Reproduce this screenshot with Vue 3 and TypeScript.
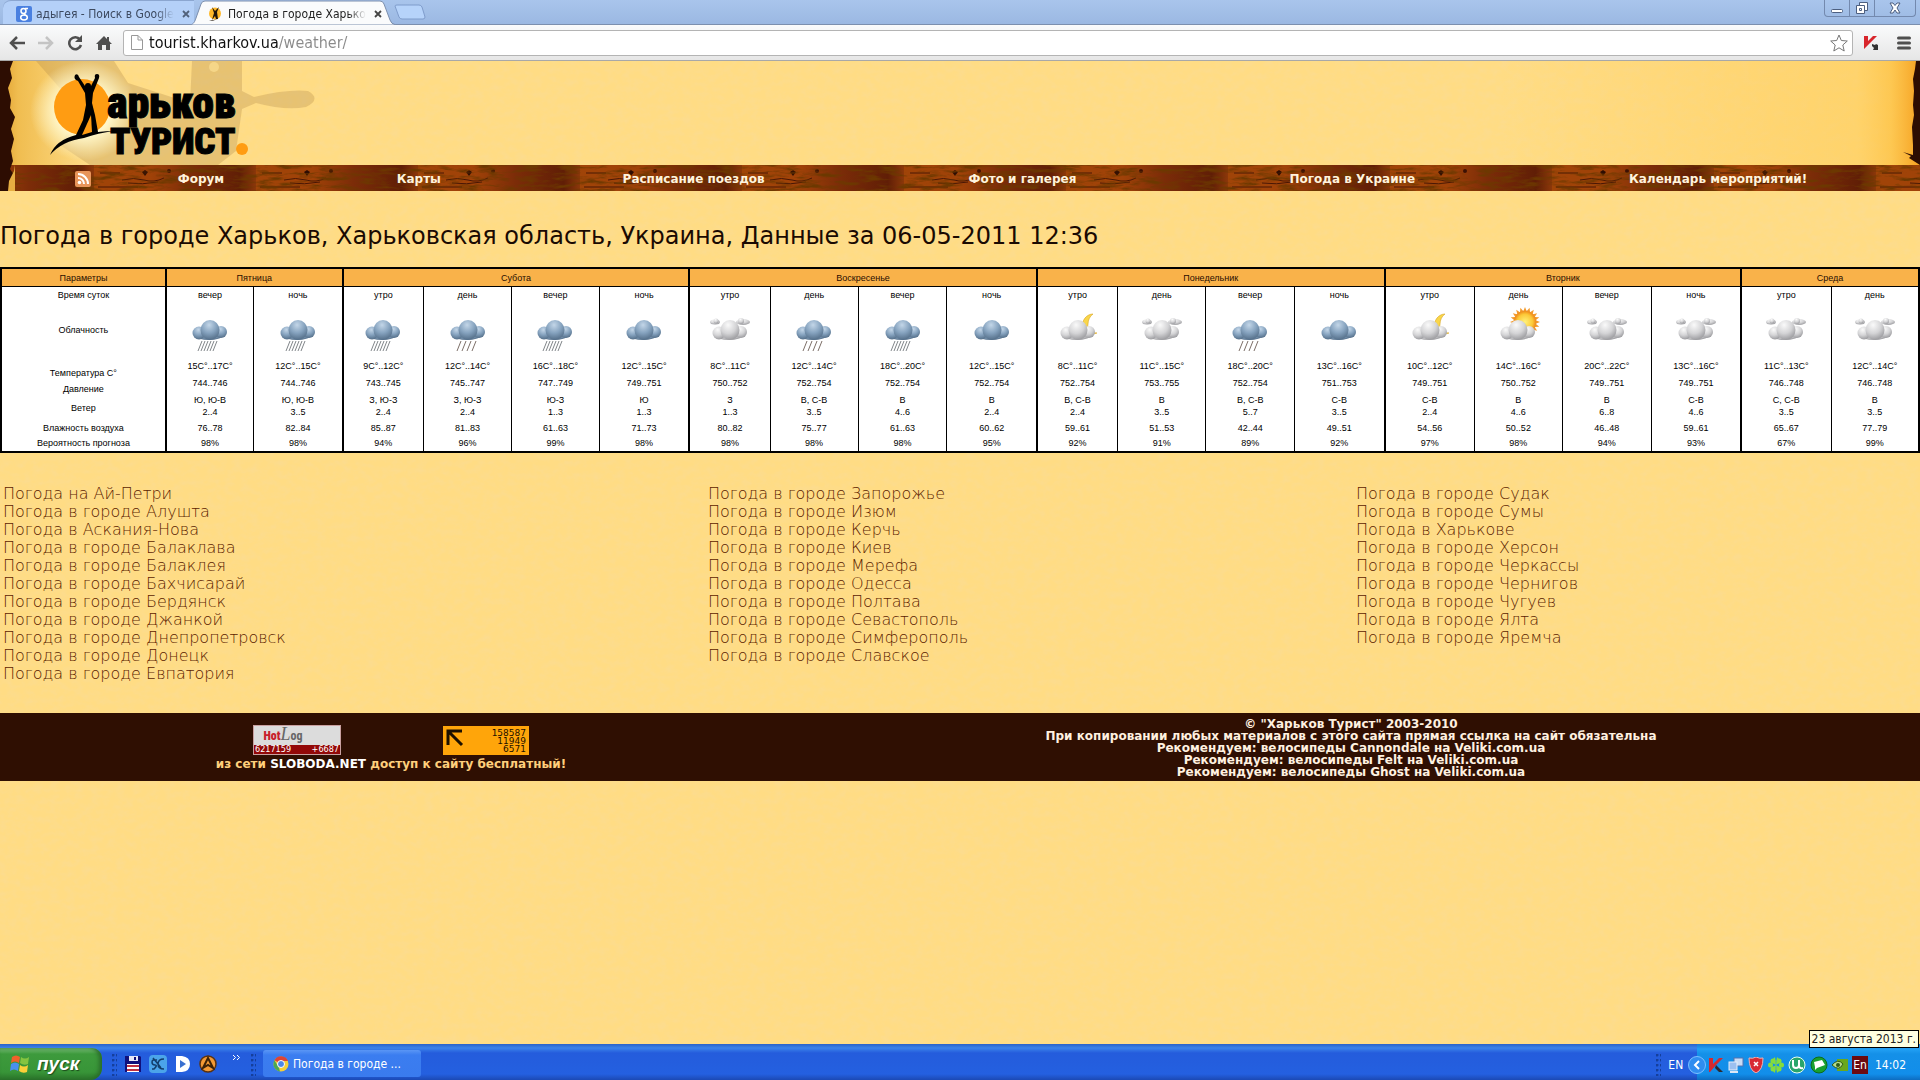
<script setup lang="ts">
type Sky = 'heavy' | 'rain' | 'dark' | 'clouds' | 'moon' | 'sun'

interface Slot {
  width: number
  time: string
  sky: Sky
  temp: string
  pressure: string
  wind: string
  speed: string
  humidity: string
  chance: string
}

interface Day {
  name: string
  slots: Slot[]
}

const slot = (
  width: number, time: string, sky: Sky, temp: string, pressure: string,
  wind: string, speed: string, humidity: string, chance: string,
): Slot => ({ width, time, sky, temp, pressure, wind, speed, humidity, chance })

const labelWidth = 165

const days: Day[] = [
  {
    name: 'Пятница',
    slots: [
      slot(88, 'вечер', 'heavy', '15C°..17C°', '744..746', 'Ю, Ю-В', '2..4', '76..78', '98%'),
      slot(89, 'ночь', 'heavy', '12C°..15C°', '744..746', 'Ю, Ю-В', '3..5', '82..84', '98%'),
    ],
  },
  {
    name: 'Субота',
    slots: [
      slot(81, 'утро', 'heavy', '9C°..12C°', '743..745', 'З, Ю-З', '2..4', '85..87', '94%'),
      slot(88, 'день', 'rain', '12C°..14C°', '745..747', 'З, Ю-З', '2..4', '81..83', '96%'),
      slot(88, 'вечер', 'heavy', '16C°..18C°', '747..749', 'Ю-З', '1..3', '61..63', '99%'),
      slot(90, 'ночь', 'dark', '12C°..15C°', '749..751', 'Ю', '1..3', '71..73', '98%'),
    ],
  },
  {
    name: 'Воскресенье',
    slots: [
      slot(81, 'утро', 'clouds', '8C°..11C°', '750..752', 'З', '1..3', '80..82', '98%'),
      slot(88, 'день', 'rain', '12C°..14C°', '752..754', 'В, С-В', '3..5', '75..77', '98%'),
      slot(89, 'вечер', 'heavy', '18C°..20C°', '752..754', 'В', '4..6', '61..63', '98%'),
      slot(90, 'ночь', 'dark', '12C°..15C°', '752..754', 'В', '2..4', '60..62', '95%'),
    ],
  },
  {
    name: 'Понедельник',
    slots: [
      slot(81, 'утро', 'moon', '8C°..11C°', '752..754', 'В, С-В', '2..4', '59..61', '92%'),
      slot(88, 'день', 'clouds', '11C°..15C°', '753..755', 'В', '3..5', '51..53', '91%'),
      slot(89, 'вечер', 'rain', '18C°..20C°', '752..754', 'В, С-В', '5..7', '42..44', '89%'),
      slot(90, 'ночь', 'dark', '13C°..16C°', '751..753', 'С-В', '3..5', '49..51', '92%'),
    ],
  },
  {
    name: 'Вторник',
    slots: [
      slot(90, 'утро', 'moon', '10C°..12C°', '749..751', 'С-В', '2..4', '54..56', '97%'),
      slot(88, 'день', 'sun', '14C°..16C°', '750..752', 'В', '4..6', '50..52', '98%'),
      slot(89, 'вечер', 'clouds', '20C°..22C°', '749..751', 'В', '6..8', '46..48', '94%'),
      slot(90, 'ночь', 'clouds', '13C°..16C°', '749..751', 'С-В', '4..6', '59..61', '93%'),
    ],
  },
  {
    name: 'Среда',
    slots: [
      slot(90, 'утро', 'clouds', '11C°..13C°', '746..748', 'С, С-В', '3..5', '65..67', '67%'),
      slot(88, 'день', 'clouds', '12C°..14C°', '746..748', 'В', '3..5', '77..79', '99%'),
    ],
  },
]

const slots = days.flatMap((d) => d.slots.map((s, i) => ({ ...s, first: i === 0 })))
const total = labelWidth + slots.reduce((sum, s) => sum + s.width, 0)
const share = (w: number) => ({ width: (w / total) * 100 + '%' })

const menu = ['Форум', 'Карты', 'Расписание поездов', 'Фото и галерея', 'Погода в Украине', 'Календарь мероприятий!']

const inCity = (names: string[]) => names.map((n) => 'Погода в городе ' + n)
const cities: string[][] = [
  [
    'Погода на Ай-Петри',
    'Погода в городе Алушта',
    'Погода в Аскания-Нова',
    ...inCity(['Балаклава', 'Балаклея', 'Бахчисарай', 'Бердянск', 'Джанкой', 'Днепропетровск', 'Донецк', 'Евпатория']),
  ],
  inCity(['Запорожье', 'Изюм', 'Керчь', 'Киев', 'Мерефа', 'Одесса', 'Полтава', 'Севастополь', 'Симферополь', 'Славское']),
  [
    ...inCity(['Судак', 'Сумы']),
    'Погода в Харькове',
    ...inCity(['Херсон', 'Черкассы', 'Чернигов', 'Чугуев', 'Ялта', 'Яремча']),
  ],
]

const partners = ['Cannondale', 'Felt', 'Ghost']

const rays = Array.from({ length: 20 }, (_, i) => i * 18)
</script>

<template>
  <div class="screen">
    <svg class="defs" width="0" height="0" aria-hidden="true">
      <defs>
        <radialGradient id="blue" cx="0.45" cy="0.25" r="0.8">
          <stop offset="0" stop-color="#c3d6e8" /><stop offset="0.5" stop-color="#86a3bf" /><stop offset="1" stop-color="#4d6781" />
        </radialGradient>
        <radialGradient id="grey" cx="0.4" cy="0.25" r="0.85">
          <stop offset="0" stop-color="#fafafa" /><stop offset="0.5" stop-color="#d4d4d6" /><stop offset="1" stop-color="#8c8c90" />
        </radialGradient>
        <radialGradient id="gold"><stop offset="0" stop-color="#fff27a" /><stop offset="0.7" stop-color="#fcc838" /><stop offset="1" stop-color="#f08a18" /></radialGradient>
        <radialGradient id="glow"><stop offset="0.5" stop-color="#fff6c8" /><stop offset="1" stop-color="#fff6c8" stop-opacity="0" /></radialGradient>
        <linearGradient id="burn"><stop offset="0" stop-color="#ffc84c" stop-opacity="0" /><stop offset="0.85" stop-color="#ffc84c" stop-opacity="0.45" /><stop offset="0.93" stop-color="#fdbf3c" stop-opacity="0.7" /><stop offset="1" stop-color="#f5a020" /></linearGradient>
        <linearGradient id="edge"><stop offset="0" stop-color="#e0a030" /><stop offset="0.2" stop-color="#f0bd50" /><stop offset="1" stop-color="#f0bd50" stop-opacity="0" /></linearGradient>
        <linearGradient id="plank">
          <stop offset="0" stop-color="#a04408" /><stop offset="0.35" stop-color="#a04208" /><stop offset="0.6" stop-color="#7c2c08" />
          <stop offset="0.9" stop-color="#601e06" /><stop offset="1" stop-color="#8c380a" />
        </linearGradient>
        <filter id="paper" x="0" y="0" width="100%" height="100%">
          <feTurbulence type="fractalNoise" baseFrequency="0.12 0.16" numOctaves="4" seed="4" />
          <feColorMatrix values="0 0 0 0 0.94  0 0 0 0 0.72  0 0 0 0 0.34  0 0.8 0 0 -0.3" />
        </filter>
        <filter id="grain" x="0" y="0" width="100%" height="100%">
          <feTurbulence type="fractalNoise" baseFrequency="0.05 0.25" numOctaves="4" seed="9" />
          <feColorMatrix values="0 0 0 0 0.15  0 0 0 0 0.04  0 0 0 0 0  0 3 0 0 -1.3" />
        </filter>
        <pattern id="wood" x="94" width="162" height="26" patternUnits="userSpaceOnUse">
          <rect width="162" height="26" fill="url(#plank)" />
          <g fill="none" stroke="#481604" stroke-width="1">
            <path d="M28 15q12-3 22 0t20-2M34 18q14 2 30-1M6 8h20M4 22h40" />
          </g>
          <path d="M48 7l3-2 3 2-3 4z" fill="#2e0c02" /><circle cx="75" cy="6" r="2" fill="#3c1003" />
        </pattern>
      </defs>
    </svg>

    <header class="browser">
      <div class="tabs">
        <div class="tab tab-idle">
          <svg width="16" height="16" viewBox="0 0 16 16" aria-hidden="true">
            <rect width="16" height="16" rx="2" fill="#4a80e0" />
            <g fill="none" stroke="#fff" stroke-width="1.5"><circle cx="7.5" cy="5" r="2.5" /><ellipse cx="8" cy="11.5" rx="3.3" ry="2.4" /><path d="M8 7.5l1.5 2M9 2.5h3" /></g>
          </svg>
          <span class="tab-title">адыгея - Поиск в Google</span>
          <button class="tab-close" aria-label="Закрыть вкладку"><svg width="8" height="8" viewBox="0 0 8 8"><path d="M1 1l6 6M7 1l-6 6" stroke="#51617a" stroke-width="1.8" /></svg></button>
        </div>
        <div class="tab tab-active">
          <svg class="tab-shape" width="206" height="25" viewBox="0 0 206 25" preserveAspectRatio="none" aria-hidden="true">
            <path d="M0 25C4 24 5 21 6 18L11 4Q12 1 15 1H190Q193 1 194 4L200 20Q201 24 206 25z" fill="#fafbfc" stroke="#7c8fae" />
          </svg>
          <svg width="16" height="16" viewBox="0 0 16 16" aria-hidden="true">
            <circle cx="7" cy="7.500" r="6" fill="#ffb92a" />
            <path d="M4 1l3 4 4-4-2 5 1 7H8L7 10l-3 4 2-7zM1 15l9-2-6 2z" fill="#20150a" />
          </svg>
          <span class="tab-title">Погода в городе Харьков</span>
          <button class="tab-close" aria-label="Закрыть вкладку"><svg width="8" height="8" viewBox="0 0 8 8"><path d="M1 1l6 6M7 1l-6 6" stroke="#444" stroke-width="1.800" /></svg></button>
        </div>
        <button class="tab-new" aria-label="Новая вкладка">
          <svg width="32" height="16" viewBox="0 0 32 16"><path d="M1 2Q1 1 3 1H25Q27 1 28 3L31 13Q31 15 29 15H8Q6 15 5 13z" fill="#b6d3fa" stroke="#7f9ccb" /></svg>
        </button>
        <div class="window-buttons">
          <button aria-label="Свернуть"><svg width="14" height="14" viewBox="0 0 14 14"><rect x="1.500" y="8.500" width="11" height="3" rx="1" fill="#fff" stroke="#4d5f80" /></svg></button>
          <button aria-label="Восстановить"><svg width="14" height="14" viewBox="0 0 14 14"><g fill="#fff" stroke="#4d5f80"><path d="M4.500 1.500h8v8h-8z" /><path d="M1.500 4.500h8v8h-8z" /><path d="M4.500 7.500h2v2h-2z" /></g></svg></button>
          <button class="wide" aria-label="Закрыть"><svg width="14" height="14" viewBox="0 0 14 14"><path d="M2 2h3l2 2.500L9 2h3L9 7l3 5H9L7 9l-2 3H2l3-5z" fill="#fff" stroke="#4d5f80" /></svg></button>
        </div>
      </div>
      <div class="toolbar">
        <button aria-label="Назад"><svg width="16" height="14" viewBox="0 0 16 14"><path d="M8 1L2 7l6 6M2 7h14" fill="none" stroke="#4f4f4f" stroke-width="2.500" /></svg></button>
        <button aria-label="Вперёд"><svg width="16" height="14" viewBox="0 0 16 14"><path d="M8 1l6 6-6 6M14 7H0" fill="none" stroke="#c4c4c4" stroke-width="2.500" /></svg></button>
        <button aria-label="Обновить"><svg width="16" height="16" viewBox="0 0 16 16"><path d="M13 4.500A6 6 0 1 0 14 10" fill="none" stroke="#4f4f4f" stroke-width="2.500" /><path d="M15 0v7H8z" fill="#4f4f4f" /></svg></button>
        <button aria-label="Домой"><svg width="16" height="16" viewBox="0 0 16 16"><path d="M8 1L0 9h2v6h4v-5h4v5h4V9h2l-3-3V2h-2v2z" fill="#4f4f4f" /></svg></button>
        <div class="address">
          <svg width="12" height="15" viewBox="0 0 12 15" aria-hidden="true"><path d="M.5.5H7L11.500 5v9.500H.5zM7 .5V5h4.500" fill="#fff" stroke="#999" /></svg>
          <input type="text" value="tourist.kharkov.ua/weather/" aria-label="Адрес" />
          <button aria-label="В закладки"><svg width="18" height="18" viewBox="0 0 18 18"><path d="M9 1l2.300 5.500 6 .5-4.500 4 1.400 6L9 13.800 3.800 17l1.400-6L.7 7l6-.5z" fill="#fff" stroke="#777" /></svg></button>
        </div>
        <button class="ext" aria-label="Kaspersky"><svg width="16" height="16" viewBox="0 0 16 16"><path d="M1 1h4v5l5-5h4L7 8l-6 6z" fill="#d8252c" /><path d="M9 9l3 1 1-1 2 1v5h-5l1-2-2-2z" fill="#333" /></svg></button>
        <button aria-label="Меню"><svg width="14" height="14" viewBox="0 0 14 14"><path d="M1.500 2h11M1.500 7h11M1.500 12h11" stroke="#4f4f4f" stroke-width="3" stroke-linecap="round" /></svg></button>
      </div>
    </header>

    <div class="page">
      <svg class="texture" aria-hidden="true"><rect width="100%" height="100%" filter="url(#paper)" /></svg>

      <div class="banner">
        <svg class="banner-right" width="420" height="104" viewBox="0 0 420 104" aria-hidden="true">
          <rect width="420" height="104" fill="url(#burn)" />
          <path d="M420 0h-4l-1 8-2 10 1 12-1 14 1 10-2 12 1 18v10l-10-3 8 4-2 2 11 7z" fill="#2d0d02" />
        </svg>
        <svg class="banner-left" width="340" height="130" viewBox="0 0 340 130" aria-hidden="true">
          <rect width="90" height="104" fill="url(#edge)" />
          <g fill="#b48b4a" opacity="0.32">
            <path d="M36 0h78l14 22 62 20 2-42h50v30l12 6q34-8 54-6 14 8-2 16-20 4-50-4l-14 6-6 42-18 14H90L60 84 80 50z" />
          </g>
          <circle cx="214" cy="6" r="5" fill="#f5d688" />
          <ellipse cx="84" cy="50" rx="54" ry="50" fill="url(#glow)" />
          <circle cx="82" cy="46" r="28" fill="#ff9c12" />
          <path d="M0 0h13l-3 8 2 9-4 10 3 12-1 8 5 9-4 12 3 10-3 12 2 10-3 8 5 8-1 7-5 5-2 8H0z" fill="#2d0d02" />
          <path d="M8 130l1-10 5-10 1-6v26z" fill="#e6ae42" />
          <path d="M75 14q3-2 4 2l6 9q0-3 3-3t3 3l4-8q-1-4 2-4t2 4l-6 15-1 10 3 12 3 17q8-1 16-1-16 2-30 7-22 3-34 17 6-15 26-20l7-15 3-15-1-12-7-12q-5-2-3-6z" fill="#000" />
          <path d="M91 54L82 74l10-3z" fill="#ff9c12" />
          <text class="logo" x="107" y="57">арьков</text>
          <text class="logo logo-caps" x="110" y="93">ТУРИСТ</text>
          <circle cx="242" cy="88" r="6" fill="#ff9c12" />
        </svg>
      </div>

      <nav class="menu">
        <svg class="wood" aria-hidden="true"><rect width="100%" height="100%" fill="url(#wood)" /><rect width="100%" height="100%" filter="url(#grain)" /></svg>
        <a href="#rss" aria-label="RSS">
          <svg width="16" height="16" viewBox="0 0 16 16"><rect width="16" height="16" rx="2" fill="#e8955a" /><g fill="none" stroke="#fff" stroke-width="2"><path d="M3 7a6 6 0 0 1 6 6M3 3a10 10 0 0 1 10 10" /></g><circle cx="4.500" cy="11.500" r="1.800" fill="#fff" /></svg>
        </a>
        <a v-for="item in menu" :key="item" href="#menu">{{ item }}</a>
      </nav>

      <main>
        <h1>Погода в городе Харьков, Харьковская область, Украина, Данные за 06-05-2011 12:36</h1>

        <table class="forecast">
          <colgroup>
            <col :style="share(labelWidth)" />
            <col v-for="(s, i) in slots" :key="i" :style="share(s.width)" />
          </colgroup>
          <thead>
            <tr>
              <th scope="col">Параметры</th>
              <th v-for="d in days" :key="d.name" scope="colgroup" class="first" :colspan="d.slots.length">{{ d.name }}</th>
            </tr>
          </thead>
          <tbody>
            <tr class="row-time">
              <th scope="row">Время суток</th>
              <td v-for="(s, i) in slots" :key="i" :class="{ first: s.first }">{{ s.time }}</td>
            </tr>
            <tr class="row-sky">
              <th scope="row">Облачность</th>
              <td v-for="(s, i) in slots" :key="i" :class="{ first: s.first }">
                <svg width="48" height="48" viewBox="0 0 48 48" aria-hidden="true">
                  <g v-if="s.sky === 'sun'">
                    <path v-for="r in rays" :key="r" d="M31 3l2 5h-4z" :transform="`rotate(${r} 31 18)`" fill="#f39a2c" />
                    <circle cx="31" cy="18" r="11" fill="url(#gold)" stroke="#ef9327" />
                  </g>
                  <path v-if="s.sky === 'moon'" d="M39 10c-6 0-12 6-10 14 2 6 8 7 14 5-7 0-10-4-9-9 0-4 2-8 5-10z" fill="#f9d64a" stroke="#d9a520" stroke-width="0.6" />
                  <g v-if="s.sky === 'clouds'" fill="url(#grey)">
                    <ellipse cx="9" cy="18" rx="5" ry="2.500" /><circle cx="10" cy="17" r="2.500" />
                    <ellipse cx="37" cy="18" rx="7" ry="3" /><circle cx="35" cy="17" r="3" />
                  </g>
                  <g :fill="['heavy', 'rain', 'dark'].includes(s.sky) ? 'url(#blue)' : 'url(#grey)'">
                    <ellipse cx="23" cy="32" rx="13" ry="4" />
                    <circle cx="35" cy="28" r="6" /><circle cx="13" cy="29" r="6.500" />
                    <ellipse cx="24" cy="26" rx="9.500" ry="10" />
                  </g>
                  <path v-if="s.sky === 'heavy'" d="M16 37l-4 10M19 37l-4 10M22 37l-4 10M25 37l-4 10M28 37l-4 10M31 37l-4 10" stroke="#72777c" stroke-width="0.9" />
                  <path v-if="s.sky === 'rain'" d="M17 37l-4 10M22 37l-4 10M27 37l-4 10M32 37l-4 10" stroke="#7d6f68" stroke-width="1" />
                </svg>
              </td>
            </tr>
            <tr class="row-temp">
              <th scope="row">Температура C°</th>
              <td v-for="(s, i) in slots" :key="i" :class="{ first: s.first }">{{ s.temp }}</td>
            </tr>
            <tr class="row-pressure">
              <th scope="row">Давление</th>
              <td v-for="(s, i) in slots" :key="i" :class="{ first: s.first }">{{ s.pressure }}</td>
            </tr>
            <tr class="row-wind">
              <th scope="row">Ветер</th>
              <td v-for="(s, i) in slots" :key="i" :class="{ first: s.first }">{{ s.wind }}<br />{{ s.speed }}</td>
            </tr>
            <tr>
              <th scope="row">Влажность воздуха</th>
              <td v-for="(s, i) in slots" :key="i" :class="{ first: s.first }">{{ s.humidity }}</td>
            </tr>
            <tr>
              <th scope="row">Вероятность прогноза</th>
              <td v-for="(s, i) in slots" :key="i" :class="{ first: s.first }">{{ s.chance }}</td>
            </tr>
          </tbody>
        </table>

        <div class="cities">
          <ul v-for="(list, i) in cities" :key="i">
            <li v-for="city in list" :key="city"><a href="#city">{{ city }}</a></li>
          </ul>
        </div>
      </main>

      <footer>
        <div class="counters">
          <div class="badges">
            <a href="#hotlog" class="hotlog">
              <span class="hotlog-name"><b>Hot</b><i>L</i>og</span>
              <span class="hotlog-stats"><span>6217159</span><span>+6687</span></span>
            </a>
            <a href="#counter" class="counter">
              <svg width="18" height="18" viewBox="0 0 18 18" aria-hidden="true"><path d="M2 16V2h14M2 2l14 14" fill="none" stroke="#1c1000" stroke-width="3" /></svg>
              <span>158587<br />11949<br />6571</span>
            </a>
          </div>
          <p>из сети <a href="#sloboda">SLOBODA.NET</a> доступ к сайту бесплатный!</p>
        </div>
        <div class="rights">
          <p>© "Харьков Турист" 2003-2010</p>
          <p>При копировании любых материалов с этого сайта прямая ссылка на сайт обязательна</p>
          <p v-for="name in partners" :key="name">Рекомендуем: велосипеды {{ name }} на <a href="#veliki">Veliki.com.ua</a></p>
        </div>
      </footer>
    </div>

    <div class="taskbar">
      <button class="start">
        <svg width="22" height="20" viewBox="0 0 22 20" aria-hidden="true">
          <path d="M3 3q4-3 8 0l-1 6q-4-3-8 0z" fill="#f0612a" /><path d="M12 3q4 3 8 0l-1 7q-4 2-8-1z" fill="#85c440" />
          <path d="M2 10q4-3 8 0l-1 7q-4-3-8 0z" fill="#4a90ee" /><path d="M11 11q4 3 8 0l-1 7q-4 2-8-1z" fill="#fbd038" />
        </svg>
        <span>пуск</span>
      </button>
      <i class="grip"></i>
      <div class="quick">
        <button aria-label="Сохранить"><svg width="18" height="18" viewBox="0 0 18 18"><path d="M1 1h15l1 1v15H1z" fill="#10107c" /><rect x="5" y="1" width="9" height="5" fill="#e8e8f8" /><rect x="10" y="2" width="2" height="3" fill="#10107c" /><rect x="3" y="9" width="12" height="8" fill="#fff" /><path d="M3 11h12M3 15h12" stroke="#c03040" stroke-width="2" /></svg></button>
        <button aria-label="SC"><svg width="18" height="18" viewBox="0 0 18 18"><rect width="18" height="18" rx="4" fill="#4ba4ea" /><path d="M8 5q-5-1-5 2t3 3-1 4H3M15 4q-6 0-6 5t6 5M4 3l5 6 3 4" fill="none" stroke="#123e6c" stroke-width="1.500" /></svg></button>
        <button aria-label="Проигрыватель"><svg width="18" height="18" viewBox="0 0 18 18"><path d="M2 1h6q8 1 8 8t-8 8H2z" fill="#fff" /><path d="M6 5l6 4-6 4z" fill="#3a70d0" /></svg></button>
        <button aria-label="AIMP"><svg width="18" height="18" viewBox="0 0 18 18"><circle cx="9" cy="9" r="8" fill="#f49a34" stroke="#5b3210" stroke-width="1.500" /><path d="M9 3l5 10-5-3-5 3z" fill="none" stroke="#3d2206" stroke-width="2" /></svg></button>
        <svg class="more" width="9" height="7" viewBox="0 0 9 7" aria-hidden="true"><path d="M1 1l2.500 2.500L1 6M5 1l2.500 2.500L5 6" fill="none" stroke="#fff" /></svg>
      </div>
      <i class="grip"></i>
      <button class="task">
        <svg width="16" height="16" viewBox="0 0 16 16" aria-hidden="true">
          <circle cx="8" cy="8" r="7.500" fill="#f4cf3a" /><path d="M8 8L1.500 4.200A7.500 7.500 0 0 1 15 5H8z" fill="#dc4436" /><path d="M1.500 4.200L6 12l1 3.400A7.500 7.500 0 0 1 1.500 4.200z" fill="#4aa853" />
          <circle cx="8" cy="8" r="3.500" fill="#4a86e8" stroke="#fff" />
        </svg>
        <span>Погода в городе ...</span>
      </button>
      <div class="side">
        <i class="grip"></i>
        <span class="lang">EN</span>
        <div class="tray">
          <button class="hide" aria-label="Скрыть значки"><svg width="18" height="18" viewBox="0 0 18 18"><circle cx="9" cy="9" r="8.500" fill="#2f8df0" stroke="#7cc0ff" /><path d="M11 5L7 9l4 4" fill="none" stroke="#fff" stroke-width="2" /></svg></button>
          <svg width="16" height="16" viewBox="0 0 16 16"><path d="M1 1h4v6l6-6h4L8 8l-6 7H1z" fill="#d42a30" /><path d="M8 8l7 7h-4l-4-4z" fill="#2b2b33" /></svg>
          <svg width="16" height="16" viewBox="0 0 16 16"><rect x="6" y="1" width="9" height="8" fill="#c9dcf5" stroke="#5273b0" /><rect x="1" y="5" width="8" height="8" fill="#9cc0f0" stroke="#e6eefa" /><path d="M2 15h8" stroke="#dbe6f6" stroke-width="2" /></svg>
          <svg width="16" height="16" viewBox="0 0 16 16"><path d="M8 0q4 2 7 1 0 12-7 15Q1 13 1 1q4 1 7-1z" fill="#d82a34" stroke="#f3b0b0" /><path d="M6 5l4 4M10 5L6 9" stroke="#fff" stroke-width="1.500" /></svg>
          <svg width="16" height="16" viewBox="0 0 16 16"><g fill="#86dc3c"><path d="M8 8L3 5q-1-3 2-3l2-2zM8 8l5-3q1-3-2-3L9 0zM8 8l-5 3q-1 3 2 3l2 2zM8 8l5 3q1 3-2 3l-2 2z" /><circle cx="2.500" cy="8" r="2.500" /><circle cx="13.500" cy="8" r="2.500" /><circle cx="5" cy="4" r="2.500" /><circle cx="11" cy="4" r="2.500" /><circle cx="5" cy="12" r="2.500" /><circle cx="11" cy="12" r="2.500" /></g></svg>
          <svg width="18" height="18" viewBox="0 0 18 18"><circle cx="9" cy="9" r="8" fill="#29a56a" stroke="#e8fff2" /><path d="M5 4v5q0 3 3 3t3-3V4M11 9q0 4 4 3" fill="none" stroke="#fff" stroke-width="2" /></svg>
          <svg width="18" height="18" viewBox="0 0 18 18"><circle cx="9" cy="9" r="8" fill="#19a030" stroke="#0c6c1c" /><path d="M4 6l8-2 3 5-8 3-2 2v-3z" fill="#fff" /></svg>
          <svg width="16" height="14" viewBox="0 0 16 14"><rect x="5" y="1" width="11" height="12" fill="#6aa81c" /><path d="M0 7q6-7 11-1-4 8-11 1z" fill="#b9dc8a" stroke="#2d5c18" /><circle cx="6" cy="7" r="2" fill="#2d5c18" /></svg>
          <span class="punto">En</span>
          <time>14:02</time>
        </div>
      </div>
      <div class="tooltip" role="tooltip">23 августа 2013 г.</div>
    </div>
  </div>
</template>

<style>
body {
  background: #ffdb82;
}
</style>

<style scoped>
.screen {
  display: flex;
  flex-direction: column;
  min-height: 100vh;
  font-family: "DejaVu Sans", Verdana, sans-serif;
  color: #1a0a02;
}
.defs {
  position: absolute;
}
button {
  display: flex;
  align-items: center;
  justify-content: center;
  padding: 0;
  border: 0;
  background: none;
  font: inherit;
  color: inherit;
}
a {
  color: inherit;
  text-decoration: none;
}
p {
  margin: 0;
}

/* Browser frame */
.browser {
  font-family: "DejaVu Sans Condensed", "DejaVu Sans", sans-serif;
}
.tabs {
  display: flex;
  align-items: stretch;
  height: 24px;
  background: linear-gradient(#a9c5ec, #9bb8e2);
}
.tab {
  position: relative;
  display: flex;
  align-items: center;
  gap: 4px;
  width: 191px;
  box-sizing: border-box;
  font-size: 12px;
}
.tab-idle {
  margin-left: 3px;
  padding: 3px 0 0 13px;
  color: #3d4a60;
  background: #b4d0f8;
  border-top: 1px solid #8ba6d0;
  border-radius: 8px 0 0 0;
}
.tab-active {
  z-index: 1;
  width: 200px;
  padding: 3px 0 0 14px;
  color: #222;
}
.tab-active > * {
  position: relative;
}
.tab-active .tab-shape {
  position: absolute;
  left: -4px;
  top: 0;
}
.tab-title {
  width: 138px;
  overflow: hidden;
  white-space: nowrap;
  mask-image: linear-gradient(90deg, #000 120px, transparent);
}
.tab-close {
  width: 16px;
  height: 16px;
}
.window-buttons {
  display: flex;
  height: 16px;
  margin: 0 4px 0 auto;
  border: 1px solid #7389ae;
  border-top: 0;
  border-radius: 0 0 4px 4px;
}
.window-buttons button {
  width: 25px;
  border-right: 1px solid #7389ae;
}
.window-buttons .wide {
  width: 40px;
  border: 0;
}
.toolbar {
  display: flex;
  align-items: center;
  gap: 13px;
  height: 37px;
  box-sizing: border-box;
  padding: 0 9px;
  background: linear-gradient(#fafbfc, #e6e6e6);
  border-top: 1px solid #7c8fae;
  border-bottom: 1px solid #a8a8a8;
}
.address {
  display: flex;
  flex: 1;
  align-items: center;
  gap: 6px;
  height: 26px;
  box-sizing: border-box;
  margin-left: -2px;
  padding: 0 4px 0 7px;
  background: #fff;
  border: 1px solid #b4b4b4;
  border-radius: 3px;
}
.address input {
  flex: 1;
  height: 24px;
  padding: 0;
  border: 0;
  outline: 0;
  font: 16px "DejaVu Sans Condensed", "DejaVu Sans", sans-serif;
  color: transparent;
  background: linear-gradient(90deg, #111 130px, #8a8a8a 130px);
  background-clip: text;
}
.ext {
  margin: 0 5px 0 -3px;
}

/* Site */
.page {
  position: relative;
  flex: 1;
  background: #ffdc84;
}
.page > * {
  position: relative;
}
.page > .texture {
  position: absolute;
  inset: 0;
  width: 100%;
  height: 100%;
}
.banner {
  display: flex;
  flex-direction: row-reverse;
  justify-content: space-between;
  height: 104px;
  z-index: 1;
}
.banner svg {
  flex: none;
}
.logo {
  font: 900 44px "Roboto Condensed", Roboto, sans-serif;
  fill: #000;
  stroke: #000;
}
.logo-caps {
  font-size: 37px;
}
.menu {
  display: grid;
  grid-template-columns: 24fr 212fr 224fr 326fr 332fr 328fr 404fr;
  align-items: center;
  height: 26px;
  box-sizing: border-box;
  padding: 2px 0 0 71px;
  font-size: 12px;
  font-weight: bold;
  line-height: 16px;
  text-align: center;
  color: #fff3dc;
}
.menu a {
  position: relative;
}
.menu a svg {
  display: block;
  margin: auto;
}
.wood {
  position: absolute;
  inset: 0;
  width: 100%;
  height: 100%;
}
h1 {
  margin: 0;
  padding: 30px 0 15px;
  font-size: 24px;
  font-weight: normal;
  line-height: 31px;
}

.forecast {
  width: 100%;
  table-layout: fixed;
  border-collapse: collapse;
  border: 2px solid #000;
  background: #fff;
  font: 9px/10px "Liberation Sans", Arial, sans-serif;
  color: #000;
  text-align: center;
}
.forecast th,
.forecast td {
  padding: 0;
  border-left: 1px solid #000;
  font-weight: normal;
}
.forecast .first {
  border-left-width: 2px;
}
.forecast thead th {
  height: 17px;
  background: #f9b24a;
  border-bottom: 1px solid #000;
  color: #2a0d00;
}
.forecast tbody tr {
  height: 16px;
}
.forecast .row-sky {
  height: 55px;
}
.row-sky svg {
  display: block;
  margin: 0 auto 4px;
}
.forecast .row-temp {
  height: 20px;
}
.row-temp th,
.row-pressure th {
  vertical-align: bottom;
}
.row-temp td,
.row-pressure td,
.row-wind td {
  vertical-align: top;
}
.forecast .row-temp td {
  padding-top: 3px;
}
.forecast .row-wind {
  height: 26px;
  line-height: 12px;
}
.forecast .row-wind th {
  padding-top: 2px;
}

.cities {
  display: grid;
  grid-template-columns: 705fr 648fr 564fr;
  padding: 32px 0 30px 3px;
  color: #5c1c00;
}
.cities ul {
  margin: 0;
  padding: 0;
  list-style: none;
  font-size: 16px;
  font-weight: 200;
  line-height: 18px;
}

footer {
  display: grid;
  grid-template-columns: 782fr 1138fr;
  min-height: 68px;
  background: #2f0f02;
  font-size: 12px;
  font-weight: bold;
  line-height: 12px;
  text-align: center;
}
.counters {
  padding-top: 12px;
  color: #ffcf7c;
}
.counters p a {
  color: #fff;
}
.badges {
  display: flex;
  justify-content: center;
  gap: 102px;
  margin-bottom: 3px;
}
.hotlog {
  width: 86px;
  height: 28px;
  border: 1px solid #c9a0a0;
  background: #dcdcdc;
}
.hotlog-name {
  display: block;
  height: 19px;
  padding-right: 28px;
  font: bold 12px/19px "Roboto Condensed", Roboto, sans-serif;
  color: #666;
}
.hotlog-name b {
  color: #c8202c;
}
.hotlog-name i {
  font: italic 18px/16px "Liberation Serif", serif;
}
.hotlog-stats {
  display: flex;
  justify-content: space-between;
  height: 9px;
  padding: 0 1px;
  background: #930808;
  font: 9px/9px "DejaVu Sans Condensed", sans-serif;
  color: #fff;
}
.counter {
  display: flex;
  justify-content: space-between;
  width: 86px;
  height: 29px;
  box-sizing: border-box;
  margin-top: 1px;
  padding: 3px 3px 0;
  background: #ffa50a;
  font: 9px/8px "DejaVu Sans", sans-serif;
  color: #1c1000;
  text-align: right;
}
.rights {
  padding-top: 5px;
  color: #fff1e0;
}

/* Desktop taskbar */
.taskbar {
  position: relative;
  display: flex;
  align-items: stretch;
  height: 36px;
  background: linear-gradient(#2a62c8, #3b82ea 4px, #245cdc 9px, #2460e0 30px, #1b49b4);
  font: 12px "DejaVu Sans Condensed", "DejaVu Sans", sans-serif;
  color: #fff;
}
.start {
  justify-content: flex-start;
  width: 102px;
  gap: 6px;
  margin-top: 4px;
  padding-left: 9px;
  border-radius: 0 10px 12px 0;
  background: linear-gradient(#7cc07a, #3d9a3c 6px, #389538 24px, #2a742a);
  box-shadow: inset -3px 0 4px #2a6c2a;
  font: italic bold 19px "Liberation Sans", Arial, sans-serif;
  text-shadow: 1px 1px 1px #1c4a1c;
}
.grip {
  width: 5px;
  margin: 10px 7px 4px 10px;
  background: radial-gradient(circle at 1px 1px, #153f9c 1px, transparent 2px) 0 0 / 4px 5px;
}
.quick {
  display: flex;
  align-items: center;
  gap: 7px;
  margin-top: 4px;
}
.quick .more {
  margin: -14px 0 0 8px;
}
.task {
  justify-content: flex-start;
  gap: 4px;
  width: 158px;
  margin: 6px 0 3px;
  padding-left: 10px;
  border-radius: 3px;
  background: linear-gradient(#5a96f5, #3b7df0 5px, #3a7bee);
}
.side {
  display: flex;
  margin-left: auto;
}
.lang {
  align-self: center;
  margin: 6px 5px 0 0;
}
.tray {
  display: flex;
  align-items: center;
  gap: 4px;
  margin-left: 9px;
  padding: 6px 14px 0 0;
  background: linear-gradient(#1b78d0, #22a0f4 5px, #1490e8 10px, #128eea 30px, #0d6cc0);
}
.hide {
  margin: 0 -2px 0 -9px;
}
.punto {
  padding: 1px;
  background: #6c0a10;
  line-height: 16px;
}
.tray time {
  margin-left: 3px;
}
.tooltip {
  position: absolute;
  right: 1px;
  bottom: 32px;
  padding: 0 2px;
  border: 1px solid #000;
  background: #ffffe1;
  font-size: 12px;
  line-height: 16px;
  color: #222;
}
</style>
